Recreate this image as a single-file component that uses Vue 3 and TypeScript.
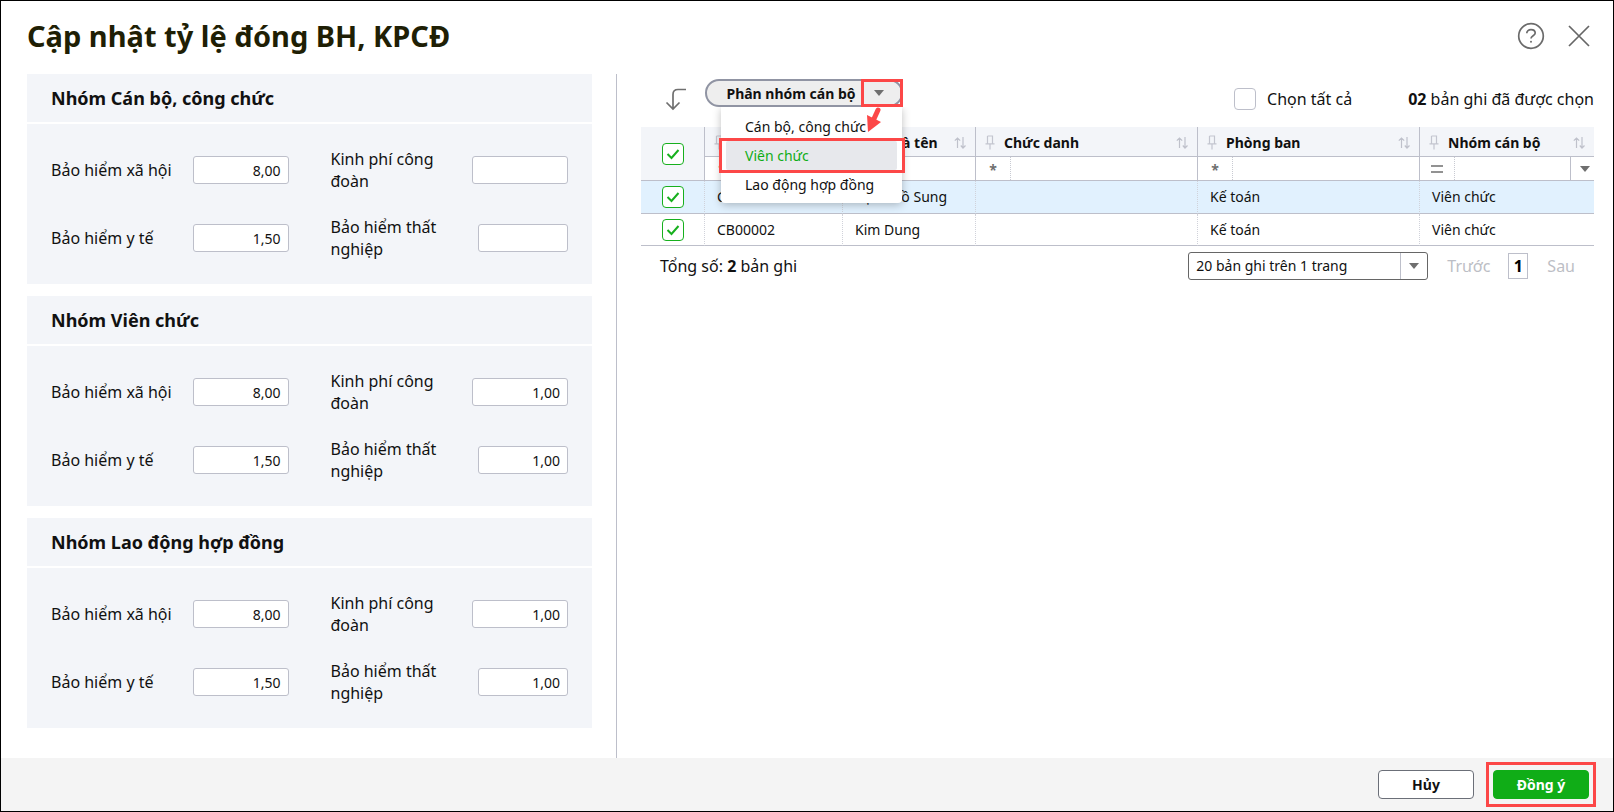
<script setup lang="ts">
import { ref } from 'vue'

interface Rate {
  label: string
  value: string
  narrow?: boolean
}
interface Group {
  id: string
  title: string
  rates: Rate[]
}
interface Staff {
  code: string
  name: string
  position: string
  department: string
  group: string
  checked: boolean
}

const makeRates = (union: string, unemployment: string): Rate[] => [
  { label: 'Bảo hiểm xã hội', value: '8,00' },
  { label: 'Kinh phí công đoàn', value: union },
  { label: 'Bảo hiểm y tế', value: '1,50' },
  { label: 'Bảo hiểm thất nghiệp', value: unemployment, narrow: true },
]

const groups = ref<Group[]>([
  { id: 'cb', title: 'Nhóm Cán bộ, công chức', rates: makeRates('', '') },
  { id: 'vc', title: 'Nhóm Viên chức', rates: makeRates('1,00', '1,00') },
  { id: 'ld', title: 'Nhóm Lao động hợp đồng', rates: makeRates('1,00', '1,00') },
])

const columns = ['Mã cán bộ', 'Họ và tên', 'Chức danh', 'Phòng ban', 'Nhóm cán bộ']
const options = ['Cán bộ, công chức', 'Viên chức', 'Lao động hợp đồng']
const active = ref('Viên chức')
const pageSize = ref('20')
const allRows = ref(true)
const everything = ref(false)
const groupFilter = ref('')

const staff = ref<Staff[]>([
  { code: 'CB00001', name: 'Bạch Hồ Sung', position: '', department: 'Kế toán', group: 'Viên chức', checked: true },
  { code: 'CB00002', name: 'Kim Dung', position: '', department: 'Kế toán', group: 'Viên chức', checked: true },
])
</script>

<template>
  <div class="dialog">
    <header class="head">
      <h1>Cập nhật tỷ lệ đóng BH, KPCĐ</h1>
      <div class="head-actions">
        <button type="button" class="icon-btn" aria-label="Trợ giúp">
          <svg width="28" height="28" viewBox="0 0 28 28" fill="none" stroke="#6b6b6b">
            <circle cx="14" cy="14" r="12.300" stroke-width="1.700" />
            <path d="M9.800 11.200c0-2.200 1.800-3.600 4.200-3.600s4.200 1.400 4.200 3.400c0 2.600-4.200 2.800-4.200 5.400" stroke-width="1.700" />
            <circle cx="14" cy="19.700" r="1" fill="#6b6b6b" stroke="none" />
          </svg>
        </button>
        <button type="button" class="icon-btn" aria-label="Đóng">
          <svg width="22" height="22" viewBox="0 0 22 22" fill="none" stroke="#666" stroke-width="1.700">
            <path d="M1 1 21 21M21 1 1 21" />
          </svg>
        </button>
      </div>
    </header>

    <main class="main">
      <div class="left">
        <section v-for="g in groups" :key="g.id" class="group">
          <h2>{{ g.title }}</h2>
          <div class="rates">
            <div v-for="(r, i) in g.rates" :key="r.label" class="rate">
              <label :for="g.id + i">{{ r.label }}</label>
              <input :id="g.id + i" v-model="r.value" type="text" :class="{ narrow: r.narrow }" />
            </div>
          </div>
        </section>
      </div>

      <div class="right">
        <div class="toolbar">
          <svg class="turn" width="24" height="24" viewBox="0 0 24 24" fill="none" stroke="#6f6f6f" stroke-width="1.700">
            <path d="M22 2.500H14Q9 2.500 9 7.500V22M2.500 15.500 9 22l6.500-6.500" />
          </svg>

          <div class="split">
            <button type="button" class="split-main">Phân nhóm cán bộ</button>
            <button type="button" class="split-caret" aria-label="Mở danh sách">
              <svg width="10" height="6" viewBox="0 0 10 6"><path d="M0 0H10L5 6Z" fill="#6f6f6f" /></svg>
            </button>
            <div class="menu">
              <button
                v-for="o in options"
                :key="o"
                type="button"
                :class="{ active: o === active }"
                @click="active = o"
              >
                {{ o }}
              </button>
            </div>
            <svg class="pointer" width="16" height="26" viewBox="0 0 16 26">
              <path d="M12 3 7 14" stroke="#fc4747" stroke-width="5" stroke-linecap="round" />
              <path d="M1 8 15 15 2 25Z" fill="#fc4747" />
            </svg>
          </div>

          <label class="select-all">
            <span class="check plain"><input v-model="everything" type="checkbox" /></span>
            Chọn tất cả
          </label>
          <span class="count"><b>02</b> bản ghi đã được chọn</span>
        </div>

        <table>
          <colgroup>
            <col class="c-check" /><col class="c-code" /><col class="c-name" />
            <col class="c-wide" /><col class="c-wide" /><col class="c-group" />
          </colgroup>
          <thead>
            <tr class="titles">
              <th rowspan="2" class="check-cell">
                <span class="check">
                  <input v-model="allRows" type="checkbox" aria-label="Chọn tất cả các dòng" />
                  <svg v-if="allRows" viewBox="0 0 22 22"><path d="m5.500 11 4 4 7-8" /></svg>
                </span>
              </th>
              <th v-for="c in columns" :key="c" class="title-cell">
                <div class="title">
                  <svg width="10" height="15" viewBox="0 0 10 15" fill="none" stroke="#c3c5cf" stroke-width="1.200">
                    <path d="M2.500 1H7.500V8.500M2.500 1V8.500M.500 8.900H9.500M5 9V14.500" />
                  </svg>
                  <span>{{ c }}</span>
                  <svg width="12" height="12" viewBox="0 0 12 12" fill="none" stroke="#bfc1cb" stroke-width="1.200">
                    <path d="M3.500 11V1M.800 3.700 3.500 1 6.200 3.700M9 0V11M6.800 8.500 9 11l2.500-2.500" />
                  </svg>
                </div>
              </th>
            </tr>
            <tr class="filters">
              <td v-for="(c, i) in columns" :key="c">
                <div class="filter">
                  <button type="button" class="op" :aria-label="'Điều kiện ' + c">
                    <svg v-if="i === 4" width="12" height="8" viewBox="0 0 12 8" stroke="#6f6f6f" stroke-width="1.300">
                      <path d="M0 1H12M0 7H12" />
                    </svg>
                    <span v-else>*</span>
                  </button>
                  <span v-if="i === 4" class="filter-select">
                    <select v-model="groupFilter" :aria-label="'Lọc ' + c">
                      <option value=""></option>
                      <option v-for="o in options" :key="o">{{ o }}</option>
                    </select>
                    <svg width="10" height="6" viewBox="0 0 10 6"><path d="M0 0H10L5 6Z" fill="#6f6f6f" /></svg>
                  </span>
                  <input v-else type="text" :aria-label="'Lọc ' + c" />
                </div>
              </td>
            </tr>
          </thead>
          <tbody>
            <tr v-for="(s, i) in staff" :key="s.code" :class="{ selected: i === 0 }">
              <td class="check-cell">
                <span class="check">
                  <input v-model="s.checked" type="checkbox" :aria-label="'Chọn ' + s.code" />
                  <svg v-if="s.checked" viewBox="0 0 22 22"><path d="m5.500 11 4 4 7-8" /></svg>
                </span>
              </td>
              <td>{{ s.code }}</td>
              <td>{{ s.name }}</td>
              <td>{{ s.position }}</td>
              <td>{{ s.department }}</td>
              <td>{{ s.group }}</td>
            </tr>
          </tbody>
        </table>

        <div class="pager">
          <span class="total">Tổng số: <b>2</b> bản ghi</span>
          <span class="page-size">
            <select v-model="pageSize" aria-label="Số bản ghi trên trang">
              <option value="20">20 bản ghi trên 1 trang</option>
              <option value="50">50 bản ghi trên 1 trang</option>
            </select>
            <svg width="10" height="6" viewBox="0 0 10 6"><path d="M0 0H10L5 6Z" fill="#6f6f6f" /></svg>
          </span>
          <button type="button" class="nav" disabled>Trước</button>
          <button type="button" class="page">1</button>
          <button type="button" class="nav" disabled>Sau</button>
        </div>
      </div>
    </main>

    <footer class="foot">
      <button type="button" class="btn">Hủy</button>
      <span class="marked"><button type="button" class="btn primary">Đồng ý</button></span>
    </footer>
  </div>
</template>

<style>
html,
body {
  background: #fff;
}
</style>

<style scoped>
* {
  box-sizing: border-box;
}
.dialog {
  min-height: 100vh;
  display: flex;
  flex-direction: column;
  border: 1px solid #000;
  background: #fff;
  color: #111;
  font: 14px/20px 'Noto Sans', sans-serif;
}
button,
input,
select {
  font: inherit;
  color: inherit;
  margin: 0;
  padding: 0;
}
button {
  border: 0;
  background: none;
  cursor: pointer;
}
.head {
  height: 73px;
  padding: 0 23px 4px 26px;
  display: flex;
  align-items: center;
  justify-content: space-between;
}
h1 {
  margin: 0;
  font-size: 29px;
  line-height: 40px;
  font-weight: 700;
  color: #1f1f05;
}
.head-actions {
  display: flex;
  align-items: center;
  gap: 23px;
}
.icon-btn {
  display: flex;
}
.main {
  flex: 1;
  display: grid;
  grid-template-columns: minmax(0, 616fr) minmax(0, 996fr);
}
.left {
  display: flex;
  flex-direction: column;
  gap: 12px;
  padding: 0 24px 28px 26px;
  border-right: 1px solid #bdbfca;
}
.group h2 {
  margin: 0 0 2px;
  padding: 12px 24px;
  background: #f3f5f9;
  font-size: 18px;
  line-height: 24px;
  font-weight: 700;
}
.rates {
  display: grid;
  grid-template-columns: 1fr 1fr;
  gap: 24px 42px;
  padding: 24px;
  background: #f3f5f9;
}
.rate {
  display: flex;
  align-items: center;
  justify-content: space-between;
  min-height: 44px;
}
.rate label {
  max-width: 124px;
  font-size: 16px;
  line-height: 22px;
}
.rate:nth-child(even) label {
  max-width: 112px;
}
.rate input {
  width: 96px;
  height: 28px;
  flex: none;
  padding: 0 7px;
  border: 1px solid #bdbfca;
  border-radius: 3px;
  background: #fff;
  text-align: right;
}
.rate input.narrow {
  width: 90px;
}
.right {
  padding: 0 19px 0 24px;
}
.toolbar {
  height: 53px;
  padding-bottom: 3px;
  display: flex;
  align-items: center;
  font-size: 16px;
}
.turn {
  margin: 0 17px 0 23px;
}
.split {
  position: relative;
  align-self: flex-start;
  margin-top: 5px;
  display: flex;
  width: 198px;
  height: 28px;
  border: 2px solid #9094a3;
  border-radius: 14px;
  background: #eee;
  font-size: 14px;
}
.split-main {
  flex: 1;
  padding: 1px 0 0 12px;
  font-weight: 700;
  white-space: nowrap;
}
.split-caret {
  width: 42px;
  height: 28px;
  margin: -2px;
  display: flex;
  align-items: center;
  justify-content: center;
  border: 3px solid #fc4747;
  padding-right: 6px;
}
.menu {
  position: absolute;
  z-index: 2;
  top: 26px;
  left: 14px;
  right: -1px;
  padding: 5px 5px 4px;
  background: #fff;
  border-radius: 0 0 4px 4px;
  box-shadow: 0 2px 8px rgba(0, 0, 0, 0.25);
  clip-path: inset(0 -12px -12px -12px);
}
.menu button {
  position: relative;
  display: block;
  width: 100%;
  height: 29px;
  padding-left: 19px;
  text-align: left;
  white-space: nowrap;
}
.menu .active {
  background: #e7e8ec;
  border-radius: 2px;
  color: #10ad17;
}
.menu .active::after {
  content: '';
  position: absolute;
  inset: -3px -8px -3px -7px;
  border: 3px solid #fc4747;
}
.pointer {
  position: absolute;
  z-index: 3;
  top: 26px;
  left: 159px;
}
.select-all {
  margin-left: auto;
  display: flex;
  align-items: center;
  gap: 11px;
}
.count {
  margin-left: 56px;
}
.check {
  position: relative;
  display: block;
  width: 22px;
  height: 22px;
}
.check input {
  appearance: none;
  display: block;
  width: 22px;
  height: 22px;
  border: 1px solid #17b01e;
  border-radius: 4px;
  background: #fff;
}
.check.plain input {
  border-color: #bdbfca;
}
.check svg {
  position: absolute;
  inset: 0;
  fill: none;
  stroke: #17b01e;
  stroke-width: 2;
  pointer-events: none;
}
table {
  width: 100%;
  table-layout: fixed;
  border-collapse: separate;
  border-spacing: 0;
}
.c-check {
  width: 63px;
}
.c-code {
  width: 138px;
}
.c-name {
  width: 133px;
}
.c-wide {
  width: 222px;
}
.c-group {
  width: 175px;
}
th,
td {
  padding: 0;
  border-bottom: 1px solid #bdbfca;
  text-align: left;
}
thead th {
  background: #f3f5f9;
}
.titles .title-cell,
.filters td {
  border-left: 1px solid #bdbfca;
}
.title {
  height: 29px;
  display: flex;
  align-items: center;
  padding: 2px 9px 0;
}
.title span {
  flex: 1;
  margin-left: 9px;
  white-space: nowrap;
}
.filter {
  height: 23px;
  display: flex;
}
.op {
  width: 35px;
  flex: none;
  display: flex;
  align-items: center;
  justify-content: center;
  border-right: 1px dotted #c8cad2;
  font-weight: 700;
  color: #6f6f6f;
}
.op span {
  padding-top: 2px;
}
.filter input,
.filter select {
  width: 100%;
  min-width: 0;
  height: 100%;
  border: 0;
  background: none;
  appearance: none;
  padding: 0 6px;
}
.filter-select {
  position: relative;
  flex: 1;
  display: flex;
  align-items: center;
}
.filter-select svg,
.page-size svg {
  flex: none;
  pointer-events: none;
}
.filter-select select {
  border-right: 1px solid #bdbfca;
}
.filter-select svg {
  margin: 0 4px 0 9px;
}
tbody td {
  height: 32px;
  padding-left: 12px;
  border-left: 1px dotted #d0d2da;
}
.check-cell,
tbody .check-cell {
  padding: 0;
  border-left: 0;
}
.check-cell .check {
  margin: 0 auto;
}
.selected {
  background: #e1f1fe;
}
.selected td {
  height: 33px;
}
.pager {
  display: flex;
  align-items: center;
  padding: 6px 19px 0 19px;
  font-size: 16px;
}
.page-size {
  margin-left: auto;
  width: 240px;
  height: 28px;
  display: flex;
  align-items: center;
  border: 1px solid #666;
  border-radius: 3px;
  font-size: 14px;
}
.page-size select {
  flex: 1;
  min-width: 0;
  height: 26px;
  padding-left: 7px;
  border: 0;
  border-right: 1px solid #bdbfca;
  background: none;
  appearance: none;
}
.page-size svg {
  margin: 0 8px;
}
.nav {
  margin-left: 19px;
  color: #bcbec5;
}
.page {
  width: 20px;
  height: 26px;
  margin-left: 18px;
  border: 1px solid #bdbfca;
  font-weight: 700;
  color: #000;
}
.foot {
  height: 53px;
  padding-right: 17px;
  display: flex;
  align-items: center;
  justify-content: flex-end;
  gap: 12px;
  background: #f4f4f4;
}
.btn {
  width: 96px;
  height: 29px;
  border: 1px solid #6b6f78;
  border-radius: 4px;
  background: #fff;
  font-weight: 700;
}
.primary {
  border-color: #10ad17;
  background: #10ad17;
  color: #fff;
}
.marked {
  display: flex;
  padding: 5px 4px;
  border: 3px solid #fc4747;
}
</style>
